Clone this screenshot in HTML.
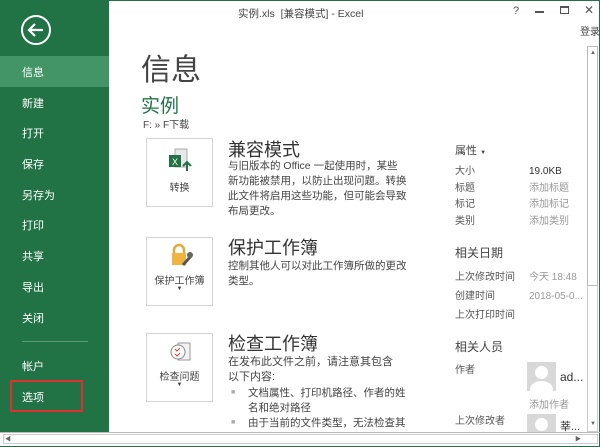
<!DOCTYPE html>
<html><head><meta charset="utf-8"><style>
*{margin:0;padding:0;box-sizing:border-box}
body{width:600px;height:447px;overflow:hidden;background:#fff;font-family:"Liberation Sans","Noto Sans CJK SC",sans-serif;position:relative;color:#444}
.a{position:absolute;white-space:nowrap}
#side{position:absolute;left:0;top:0;width:109px;height:432px;background:#217346}
.n{position:absolute;left:22px;color:#fff;font-size:11px}
.box{position:absolute;left:146px;width:67px;height:69px;border:1px solid #d4d4d4;background:#fff}
.box span{position:absolute;left:0;width:100%;text-align:center;font-size:10px;color:#444}
.h{font-size:18px;color:#333}
.d{font-size:10.5px;line-height:15px;color:#444}
.r{font-size:10px;color:#555}
.v{font-size:10px;color:#999}
#main{position:absolute;left:0;top:0;width:600px;height:432px;overflow:hidden}
</style></head><body>
<div id="side">
<svg class="a" style="left:20px;top:14px" width="32" height="32"><circle cx="16" cy="16" r="14" fill="none" stroke="#fff" stroke-width="2"/><path d="M9 16h14M15 10l-6 6 6 6" fill="none" stroke="#fff" stroke-width="2.2"/></svg>
<div class="a" style="left:0;top:56px;width:109px;height:31px;background:#439467"></div>
<div class="n" style="top:64px">信息</div>
<div class="n" style="top:95px">新建</div>
<div class="n" style="top:125px">打开</div>
<div class="n" style="top:156px">保存</div>
<div class="n" style="top:187px">另存为</div>
<div class="n" style="top:217px">打印</div>
<div class="n" style="top:248px">共享</div>
<div class="n" style="top:279px">导出</div>
<div class="n" style="top:310px">关闭</div>
<div class="a" style="left:22px;top:341px;width:66px;height:1px;background:#5c9a77"></div>
<div class="n" style="top:358px">帐户</div>
<div class="n" style="top:389px">选项</div>
<div class="a" style="left:10px;top:380px;width:73px;height:32px;border:2px solid #e03030"></div>
</div>
<div class="a" style="left:0;top:0;width:600px;height:447px;border:1px solid #217346;border-left:none;pointer-events:none"></div>
<div class="a" style="left:238px;top:6px;font-size:10.5px;color:#444">实例.xls &nbsp;[兼容模式] - Excel</div>
<div class="a" style="left:513px;top:5px;font-size:11px;color:#555">?</div>
<div class="a" style="left:535px;top:11px;width:9px;height:1.5px;background:#555"></div>
<div class="a" style="left:560px;top:6px;width:9px;height:8px;border:1px solid #555;border-top-width:2px"></div>
<div class="a" style="left:584px;top:3px;font-size:12px;color:#555">✕</div>
<div class="a" style="left:580px;top:23px;font-size:10px;color:#444">登录</div>
<div class="a" style="left:587px;top:46px;width:11px;height:386px;border:1px solid #ccc;background:#fff"></div>
<div class="a" style="left:587px;top:46px;width:11px;height:240px;border:1px solid #bbb;background:#fff"></div>
<div class="a" style="left:590px;top:50px;font-size:6px;color:#666">▲</div>
<div class="a" style="left:590px;top:421px;font-size:6px;color:#666">▼</div>
<div class="a" style="left:0;top:432px;width:600px;height:1px;background:#bbb"></div>
<div class="a" style="left:3px;top:434px;width:595px;height:10px;border:1px solid #ccc"></div>
<div class="a" style="left:5px;top:434px;font-size:6px;color:#666">◀</div>
<div class="a" style="left:575px;top:434px;font-size:6px;color:#666">▶</div>

<div id="main">
<div class="a" style="left:141px;top:45px;font-size:30px;color:#444">信息</div>
<div class="a" style="left:141px;top:91px;font-size:19px;color:#217346">实例</div>
<div class="a" style="left:143px;top:116px;font-size:10px;color:#444">F: » F下载</div>

<div class="box" style="top:138px">
<svg class="a" style="left:21px;top:8px" width="26" height="28"><rect x="7" y="2" width="12" height="18" fill="#e8e8e8" stroke="#aaa"/><rect x="1" y="8" width="12" height="12" fill="#217346"/><text x="4" y="18" font-size="9" fill="#fff" font-family="Liberation Sans">X</text><path d="M19 24v-9M15 19l4-4 4 4" stroke="#217346" stroke-width="2" fill="none"/></svg>
<span style="top:40px">转换</span></div>
<div class="a h" style="left:228px;top:136px">兼容模式</div>
<div class="a d" style="left:228px;top:159px">与旧版本的 Office 一起使用时，某些<br>新功能被禁用，以防止出现问题。转换<br>此文件将启用这些功能，但可能会导致<br>布局更改。</div>

<div class="box" style="top:237px">
<svg class="a" style="left:22px;top:5px" width="26" height="26"><path d="M5 10V7a5 5 0 0 1 10 0v3" stroke="#e2a83c" stroke-width="2.5" fill="none"/><rect x="3" y="10" width="14" height="12" fill="#f0b440"/><path d="M14 22l8-9" stroke="#555" stroke-width="3"/><circle cx="21" cy="12" r="3" fill="#666"/></svg>
<span style="top:34px">保护工作簿</span><span style="top:48px;font-size:6px">▼</span></div>
<div class="a h" style="left:228px;top:234px">保护工作簿</div>
<div class="a d" style="left:228px;top:259px">控制其他人可以对此工作簿所做的更改<br>类型。</div>

<div class="box" style="top:333px">
<svg class="a" style="left:22px;top:6px" width="24" height="26"><rect x="9" y="3" width="12" height="17" fill="#f2f2f2" stroke="#999"/><circle cx="9" cy="12" r="7" fill="#fff" stroke="#888"/><path d="M6 9l2 2 3-3M6 14l2 2 3-3" stroke="#d04030" fill="none"/></svg>
<span style="top:34px">检查问题</span><span style="top:48px;font-size:6px">▼</span></div>
<div class="a h" style="left:228px;top:330px">检查工作簿</div>
<div class="a d" style="left:228px;top:355px;font-size:11px">在发布此文件之前，请注意其包含<br>以下内容:</div>
<div class="a" style="left:231px;top:389px;color:#aaa;font-size:7px">■</div>
<div class="a" style="left:231px;top:419px;color:#aaa;font-size:7px">■</div>
<div class="a d" style="left:248px;top:386px">文档属性、打印机路径、作者的姓<br>名和绝对路径</div>
<div class="a d" style="left:248px;top:416px">由于当前的文件类型，无法检查其<br>辅助功能问题的内容</div>
</div>

<div class="a" style="left:455px;top:142px;font-size:11px;color:#444">属性 <span style="font-size:6px">▼</span></div>
<div class="a r" style="left:455px;top:164px;line-height:16.5px">大小<br>标题<br>标记<br>类别</div>
<div class="a v" style="left:529px;top:164px;line-height:16.5px"><span style="color:#333">19.0KB</span><br>添加标题<br>添加标记<br>添加类别</div>
<div class="a" style="left:455px;top:244px;font-size:12px;color:#444">相关日期</div>
<div class="a r" style="left:455px;top:268px;line-height:19px">上次修改时间<br>创建时间<br>上次打印时间</div>
<div class="a v" style="left:529px;top:268px;line-height:19px">今天 18:48<br>2018-05-0...</div>
<div class="a" style="left:455px;top:338px;font-size:12px;color:#444">相关人员</div>
<div class="a r" style="left:455px;top:361px">作者</div>
<div class="a" style="left:527px;top:362px;width:29px;height:29px;background:#d8d8d8;overflow:hidden"><div class="a" style="left:8px;top:4px;width:13px;height:13px;border-radius:50%;background:#fff"></div><div class="a" style="left:3px;top:19px;width:23px;height:16px;border-radius:50%;background:#fff"></div></div>
<div class="a" style="left:560px;top:370px;font-size:12px;color:#333">ad...</div>
<div class="a v" style="left:529px;top:396px">添加作者</div>
<div class="a r" style="left:455px;top:412px">上次修改者</div>
<div class="a" style="left:527px;top:414px;width:29px;height:18px;background:#d8d8d8;overflow:hidden"><div class="a" style="left:8px;top:4px;width:13px;height:13px;border-radius:50%;background:#fff"></div></div>
<div class="a" style="left:560px;top:418px;font-size:11px;color:#333;height:14px;overflow:hidden">莘...</div>
</body></html>
